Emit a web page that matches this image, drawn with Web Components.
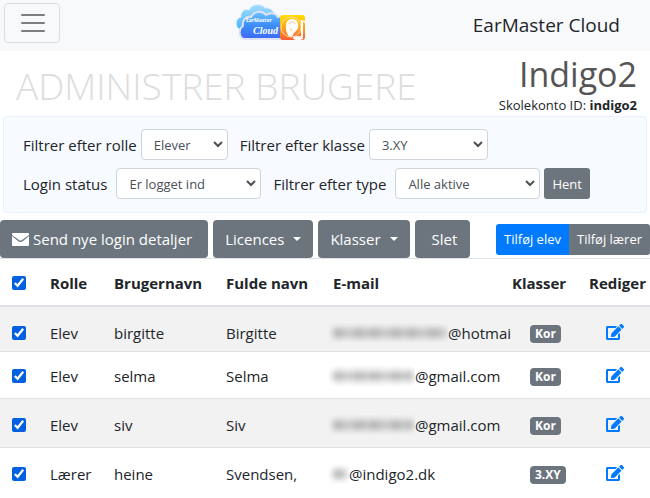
<!DOCTYPE html>
<html lang="da">
<head>
<meta charset="utf-8">
<meta name="viewport" content="width=device-width, initial-scale=1">
<title>EarMaster Cloud</title>
<style>
    body {
        margin: 0;
        background: #fff;
        color: #212529;
        font: 15px/24px "Open Sans", "Noto Sans", sans-serif;
        --blue: #007bff;
        --gray: #6c757d;
        --line: #dee2e6;
    }
</style>
</head>
<body>
<cloud-navbar>EarMaster Cloud</cloud-navbar>
<main>
    <page-heading account="indigo2">
        Administrer brugere
        <span slot="school">Indigo2</span>
    </page-heading>
    <filter-panel>
        <filter-select label="Filtrer efter rolle" options="Elever,Lærere,Alle" size="s"></filter-select>
        <filter-select label="Filtrer efter klasse" options="3.XY,Kor" size="m"></filter-select>
        <filter-select slot="second" label="Login status" options="Er logget ind,Aldrig logget ind" size="l"></filter-select>
        <filter-select slot="second" label="Filtrer efter type" options="Alle aktive,Inaktive" size="l"></filter-select>
        <action-button slot="second" small>Hent</action-button>
    </filter-panel>
    <user-toolbar>
        <action-button icon="mail">Send nye login detaljer</action-button>
        <action-button menu>Licences</action-button>
        <action-button menu>Klasser</action-button>
        <action-button wide>Slet</action-button>
        <action-button slot="add" small primary join="start">Tilføj elev</action-button>
        <action-button slot="add" small join="end">Tilføj lærer</action-button>
    </user-toolbar>
    <user-table></user-table>
</main>

<script>
/// Drawn logo: two clouds and the orange ear badge.
class CloudLogo extends HTMLElement {

    connectedCallback() {
        this.attachShadow({mode: "open"}).innerHTML = `
            <style>
                :host {
                    display: block;
                    line-height: 0;
                }
            </style>
            <svg width="72" height="40" viewBox="0 0 72 40" role="img" aria-label="EarMaster Cloud">
                <defs>
                    <linearGradient id="back" x1="0" y1="0" x2="0" y2="1">
                        <stop offset="0" stop-color="#a5dcff"/>
                        <stop offset="1" stop-color="#3fb2fb"/>
                    </linearGradient>
                    <linearGradient id="front" x1="0" y1="0" x2="0" y2="1">
                        <stop offset="0" stop-color="#6cc4ff"/>
                        <stop offset=".5" stop-color="#3d8df8"/>
                        <stop offset="1" stop-color="#3c6af5"/>
                    </linearGradient>
                    <linearGradient id="badge" x1="0" y1="0" x2="0" y2="1">
                        <stop offset="0" stop-color="#ffe000"/>
                        <stop offset=".5" stop-color="#ffa51e"/>
                        <stop offset="1" stop-color="#fa5a32"/>
                    </linearGradient>
                </defs>
                <path d="M6 27C-1 25 0 15 6 14C5 9 10 5 14 7C17 0 27 0 30 5C36 4 40 9 39 13L12 28Z" fill="url(#back)" stroke="#e3f2fd"/>
                <path d="M9 36C4 35 3 26 8 23C7 17 11 13 16 14C19 8 27 7 31 12C35 9 41 10 43 14C49 12 55 17 54 23L55 36Z" fill="url(#front)" stroke="#e0e2f2" stroke-width="2"/>
                <rect x="45" y="12" width="25" height="25" rx="3" fill="url(#badge)"/>
                <circle cx="56" cy="24" r="10" fill="none" stroke="#ffdc9c"/>
                <path d="M53 32C51 29 51 27 51 23C51 18 54 16 57 16C62 16 64 20 63 25C62 28 59 29 58 32C57 34 54 34 53 32Z" fill="#fff"/>
                <path d="M54 21C55 18 60 18 60 21M56 25V28" fill="none" stroke="#ffc27a"/>
                <path d="M65 17L70 18V20L68 19V34H66V19Z" fill="#fff"/>
                <ellipse cx="63" cy="35" rx="5" ry="2" fill="#fff"/>
                <text x="11" y="19" font-family="Open Sans, sans-serif" font-size="5" font-weight="700" fill="#fff">EarMaster</text>
                <text x="18" y="31" font-family="Liberation Serif, serif" font-size="10" font-style="italic" font-weight="700" fill="#fff">Cloud</text>
            </svg>
        `
    }

}

class CloudNavbar extends HTMLElement {

    connectedCallback() {
        this.attachShadow({mode: "open"}).innerHTML = `
            <style>
                :host {
                    display: flex;
                    justify-content: space-between;
                    align-items: center;
                    box-sizing: border-box;
                    min-height: 51px;
                    padding: 0 30px 5px 4px;
                    background: #f8f9fb;
                    color: #212529;
                    font-size: 19px;
                }

                button {
                    display: block;
                    width: 56px;
                    height: 40px;
                    margin-right: 10px;
                    padding: 0 13px;
                    border: 1px solid #dcdde0;
                    border-radius: 4px;
                    background: none;
                }

                svg {
                    display: block;
                    margin: auto;
                }

                .brand {
                    padding-top: 4px;
                }
            </style>
            <button type="button" aria-label="Menu">
                <svg width="30" height="30" viewBox="0 0 30 30" stroke="#7d7e80" stroke-width="2" stroke-linecap="round">
                    <path d="M4 7H26M4 15H26M4 23H26"/>
                </svg>
            </button>
            <cloud-logo></cloud-logo>
            <span class="brand"><slot></slot></span>
        `
    }

}

class PageHeading extends HTMLElement {

    connectedCallback() {
        const account = this.getAttribute("account")
        this.attachShadow({mode: "open"}).innerHTML = `
            <style>
                :host {
                    display: flex;
                    justify-content: space-between;
                    align-items: flex-end;
                    padding: 0 13px 3px 16px;
                }

                h1 {
                    margin: 0;
                    padding-bottom: 3px;
                    color: #ddd;
                    font-size: 37px;
                    font-weight: 300;
                    line-height: 48px;
                    text-transform: uppercase;
                }

                .school {
                    text-align: right;
                    font-size: 13px;
                    line-height: 16px;
                }

                h2 {
                    margin: 0;
                    color: #555;
                    font-size: 34px;
                    font-weight: 400;
                    line-height: 46px;
                }
            </style>
            <h1><slot></slot></h1>
            <div class="school">
                <h2><slot name="school"></slot></h2>
                Skolekonto ID: <b>${account}</b>
            </div>
        `
    }

}

class FilterPanel extends HTMLElement {

    connectedCallback() {
        this.attachShadow({mode: "open"}).innerHTML = `
            <style>
                :host {
                    display: flex;
                    flex-direction: column;
                    gap: 8px;
                    margin: 0 3px;
                    padding: 12px 19px 13px;
                    border: 1px solid #e7f1ff;
                    border-radius: 4px;
                    background: #f7faff;
                }

                .filters {
                    display: flex;
                    align-items: center;
                    gap: 12px;
                }

                ::slotted(action-button) {
                    margin-left: -8px;
                }
            </style>
            <div class="filters"><slot></slot></div>
            <div class="filters"><slot name="second"></slot></div>
        `
    }

}

/// A label with its drop-down. "size" picks the width of the drop-down.
class FilterSelect extends HTMLElement {

    connectedCallback() {
        const options = this.getAttribute("options").split(",")
        this.attachShadow({mode: "open"}).innerHTML = `
            <style>
                :host {
                    display: flex;
                    align-items: center;
                    gap: 4px;
                    white-space: nowrap;
                }

                :host([size=l]) {
                    gap: 9px;
                }

                .field {
                    display: grid;
                    align-items: center;
                    width: 87px;
                }

                :host([size=m]) .field {
                    width: 119px;
                }

                :host([size=l]) .field {
                    width: 145px;
                }

                select, svg {
                    grid-area: 1 / 1;
                }

                select {
                    appearance: none;
                    width: 100%;
                    height: 31px;
                    padding: 0 24px 0 12px;
                    border: 1px solid #ced4da;
                    border-radius: 4px;
                    background: #fff;
                    color: #495057;
                    font: inherit;
                    font-size: 13px;
                }

                svg {
                    justify-self: end;
                    margin-right: 5px;
                    pointer-events: none;
                }
            </style>
            <label for="field">${this.getAttribute("label")}</label>
            <div class="field">
                <select id="field">${options.map(option => `<option>${option}</option>`).join("")}</select>
                <svg width="10" height="7" viewBox="0 0 10 7" fill="none" stroke="#495057" stroke-width="2">
                    <path d="M1 1L5 5L9 1"/>
                </svg>
            </div>
        `
    }

}

class ActionButton extends HTMLElement {

    connectedCallback() {
        const mail = `
            <svg width="17" height="13" viewBox="0 0 17 13" aria-hidden="true">
                <path fill="#fff" d="M1 0H16Q17 0 17 1V2L10 7Q8.5 8 7 7L0 2V1Q0 0 1 0ZM0 3L6 8Q8.5 10 11 8L17 3V12Q17 13 16 13H1Q0 13 0 12Z"/>
            </svg>
        `
        this.attachShadow({mode: "open"}).innerHTML = `
            <style>
                :host {
                    display: block;
                }

                button {
                    display: flex;
                    align-items: center;
                    gap: 4px;
                    height: 38px;
                    padding: 0 12px;
                    border: 0;
                    border-radius: 4px;
                    background: var(--gray);
                    color: #fff;
                    font: inherit;
                    white-space: nowrap;
                }

                :host([icon]) button {
                    padding-right: 16px;
                }

                :host([wide]) button {
                    padding: 0 13px 0 17px;
                }

                :host([small]) button {
                    height: 31px;
                    padding: 0 8px;
                    border-radius: 3px;
                    font-size: 13px;
                }

                :host([primary]) button {
                    background: var(--blue);
                }

                :host([join=start]) button {
                    border-top-right-radius: 0;
                    border-bottom-right-radius: 0;
                }

                :host([join=end]) button {
                    border-top-left-radius: 0;
                    border-bottom-left-radius: 0;
                }

                .caret {
                    margin-left: 5px;
                    border: 4px solid transparent;
                    border-top-color: #fff;
                    border-bottom: 0;
                }
            </style>
            <button type="button">
                ${this.getAttribute("icon") == "mail" ? mail : ""}
                <slot></slot>
                ${this.hasAttribute("menu") ? `<span class="caret"></span>` : ""}
            </button>
        `
    }

}

class UserToolbar extends HTMLElement {

    connectedCallback() {
        this.attachShadow({mode: "open"}).innerHTML = `
            <style>
                :host {
                    display: flex;
                    justify-content: space-between;
                    align-items: center;
                    margin-top: 7px;
                }

                .actions, .add {
                    display: flex;
                }

                .actions {
                    gap: 5px;
                }
            </style>
            <div class="actions"><slot></slot></div>
            <div class="add"><slot name="add"></slot></div>
        `
    }

}

// "hidden" is the width of the masked part of the address
const users = [
    {role: "Elev", login: "birgitte", name: "Birgitte", hidden: 120, domain: "@hotmai", group: "Kor"},
    {role: "Elev", login: "selma", name: "Selma", hidden: 87, domain: "@gmail.com", group: "Kor"},
    {role: "Elev", login: "siv", name: "Siv", hidden: 87, domain: "@gmail.com", group: "Kor"},
    {role: "Lærer", login: "heine", name: "Svendsen,", hidden: 21, domain: "@indigo2.dk", group: "3.XY"},
]

class UserTable extends HTMLElement {

    connectedCallback() {
        this.attachShadow({mode: "open"}).innerHTML = `
            <style>
                :host {
                    display: block;
                }

                table {
                    width: 100%;
                    table-layout: fixed;
                    border-spacing: 0;
                }

                .check { width: 38px; }
                .role { width: 64px; }
                .login { width: 112px; }
                .name { width: 107px; }
                .group { width: 66px; }
                .edit { width: 73px; }

                th, td {
                    box-sizing: border-box;
                    padding: 14px 0 0 12px;
                    border-top: 1px solid var(--line);
                    text-align: left;
                    vertical-align: top;
                    white-space: nowrap;
                }

                th {
                    height: 49px;
                    padding-top: 12px;
                    border-bottom: 2px solid var(--line);
                }

                td {
                    height: 49px;
                }

                tbody tr:first-child td {
                    height: 44px;
                    border-top: 0;
                }

                tbody tr:nth-child(2) td {
                    height: 47px;
                    padding-top: 12px;
                }

                tbody tr:nth-child(odd) {
                    background: #f2f2f2;
                }

                th:nth-child(6) {
                    padding-left: 1px;
                }

                td:nth-child(5) {
                    padding-left: 7px;
                    overflow: hidden;
                }

                td:nth-child(6) {
                    padding-left: 19px;
                }

                td:nth-child(7) {
                    padding-left: 29px;
                }

                input {
                    display: block;
                    width: 14px;
                    height: 14px;
                    margin: 5px 0;
                    accent-color: #0060df;
                }

                .mail {
                    display: flex;
                    align-items: center;
                }

                .mask {
                    flex: none;
                    height: 20px;
                    overflow: hidden;
                }

                .mask::before {
                    content: "";
                    display: block;
                    height: 10px;
                    margin: 5px 2px 0 5px;
                    background:
                        repeating-linear-gradient(90deg, #5556 0 7px, #5550 12px 19px, #5556 24px 29px, #5550 33px 37px),
                        #aaa;
                    filter: blur(3px);
                    opacity: .6;
                }

                .badge {
                    display: block;
                    width: fit-content;
                    margin: 4px 0;
                    padding: 0 5px;
                    border-radius: 4px;
                    background: var(--gray);
                    color: #fff;
                    font-size: 12px;
                    font-weight: 700;
                    line-height: 18px;
                }

                a {
                    display: block;
                    width: 19px;
                    padding: 3px 0;
                    color: var(--blue);
                }

                svg {
                    display: block;
                }
            </style>
            <table>
                <colgroup>
                    <col class="check"><col class="role"><col class="login"><col class="name"><col><col class="group"><col class="edit">
                </colgroup>
                <thead>
                    <tr>
                        <th><input type="checkbox" aria-label="Vælg alle" checked></th>
                        <th>Rolle</th>
                        <th>Brugernavn</th>
                        <th>Fulde navn</th>
                        <th>E-mail</th>
                        <th>Klasser</th>
                        <th>Rediger</th>
                    </tr>
                </thead>
                <tbody>${users.map(user => this.row(user)).join("")}</tbody>
            </table>
        `
    }

    row(user) {
        return `
            <tr>
                <td><input type="checkbox" aria-label="Vælg ${user.login}" checked></td>
                <td>${user.role}</td>
                <td>${user.login}</td>
                <td>${user.name}</td>
                <td><div class="mail"><span class="mask" style="width: ${user.hidden}px"></span>${user.domain}</div></td>
                <td><span class="badge">${user.group}</span></td>
                <td>
                    <a href="#${user.login}" aria-label="Rediger ${user.login}">
                        <svg width="18" height="16" viewBox="0 0 576 512" fill="currentColor">
                            <path d="M403 83l90 90c4 4 4 10 0 14L274 406l-93 10c-12 1-23-9-21-21l10-93L389 83c4-4 10-4 14 0zm162-23l-49-49c-15-15-40-15-55 0l-35 36c-4 4-4 10 0 14l90 90c4 4 10 4 14 0l35-36c15-15 15-40 0-55zM384 346V448H64V128h230c3 0 6-1 8-4l40-40c8-7 3-20-8-20H48C22 64 0 86 0 112v352c0 26 22 48 48 48h352c26 0 48-22 48-48V306c0-11-13-16-20-8l-40 40c-3 2-4 5-4 8z"/>
                        </svg>
                    </a>
                </td>
            </tr>
        `
    }

}

customElements.define("cloud-logo", CloudLogo)
customElements.define("cloud-navbar", CloudNavbar)
customElements.define("page-heading", PageHeading)
customElements.define("filter-panel", FilterPanel)
customElements.define("filter-select", FilterSelect)
customElements.define("action-button", ActionButton)
customElements.define("user-toolbar", UserToolbar)
customElements.define("user-table", UserTable)
</script>
</body>
</html>
